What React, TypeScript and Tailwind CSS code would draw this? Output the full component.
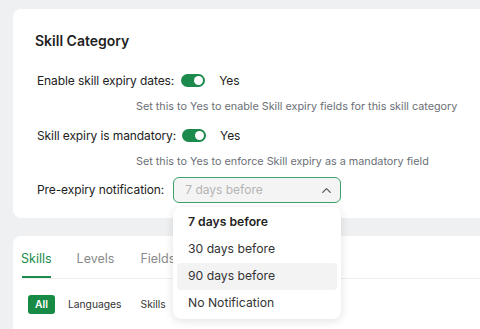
import { ChevronUp } from 'lucide-react';

function Toggle() {
  return (
    <span className="inline-flex items-center bg-[#1b8a4c] rounded-full w-[24px] h-[13px] px-[2px] justify-end">
      <span className="bg-white rounded-full w-[9px] h-[9px]"></span>
    </span>
  );
}

const options = ['7 days before', '30 days before', '90 days before', 'No Notification'];

export default function App() {
  return (
    <div className="relative bg-[#eef0f2] h-[329px] overflow-hidden pt-[9px] pl-[13px] font-['Inter',sans-serif] text-[#222]">
      <div className="bg-white rounded-l-lg h-[209px] pl-[22px] pt-[23px]">
        <h1 className="font-semibold text-[14px] leading-[18px] text-[#1f1f1f]">Skill Category</h1>

        <div className="mt-[22px] pl-[2px] text-[12px] tracking-[-0.1px]">
          <div className="flex items-center h-[18px]">
            <span>Enable skill expiry dates:</span>
            <span className="ml-[7px]"><Toggle /></span>
            <span className="ml-[14px]">Yes</span>
          </div>
          <div className="mt-[10px] ml-[99px] text-[10.8px] tracking-normal leading-[14px] text-[#6b6f76]">
            Set this to Yes to enable Skill expiry fields for this skill category
          </div>

          <div className="flex items-center h-[18px] mt-[13px]">
            <span>Skill expiry is mandatory:</span>
            <span className="ml-[6px]"><Toggle /></span>
            <span className="ml-[14px]">Yes</span>
          </div>
          <div className="mt-[10px] ml-[99px] text-[10.8px] tracking-normal leading-[14px] text-[#6b6f76]">
            Set this to Yes to enforce Skill expiry as a mandatory field
          </div>

          <div className="flex items-center mt-[8px]">
            <span>Pre-expiry notification:</span>
            <div className="ml-[9px] flex items-center justify-between w-[168px] h-[26px] border-[1.5px] border-[#3aa36a] rounded-md bg-[#f4f4f4] pl-[11px] pr-[6px]">
              <span className="text-[#b4b4b4] text-[12px] tracking-normal">7 days before</span>
              <ChevronUp size={15} strokeWidth={2} className="text-[#555]" />
            </div>
          </div>
        </div>
      </div>

      <div className="bg-white rounded-l-lg h-[120px] mt-[18px] pl-[8px]">
        <div className="flex items-end h-[43px] border-b border-[#eeeeee] text-[12.5px]">
          <div className="flex flex-col items-center">
            <span className="text-[#1b8a4c] leading-[18px]">Skills</span>
            <span className="bg-[#1b8a4c] w-[29px] h-[2px] mt-[8px]"></span>
          </div>
          <span className="text-[#8a8a8a] leading-[18px] ml-[25px] mb-[10px]">Levels</span>
          <span className="text-[#8a8a8a] leading-[18px] ml-[26px] mb-[10px]">Fields</span>
        </div>
        <div className="flex items-center mt-[16px] pl-[7px] text-[10.3px]">
          <span className="bg-[#178a45] text-white font-semibold rounded-[3px] px-[7px] h-[19px] flex items-center">All</span>
          <span className="ml-[13px] text-[#333]">Languages</span>
          <span className="ml-[19px] text-[#333]">Skills</span>
        </div>
      </div>

      <div className="absolute left-[173px] top-[207px] w-[168px] bg-white rounded-lg shadow-[0_2px_10px_rgba(0,0,0,0.12)] py-[2px] px-[4px] text-[12.2px]">
        {options.map((o, i) => (
          <div
            key={o}
            className={`h-[27px] flex items-center pl-[11px] rounded ${i === 0 ? 'font-semibold text-[#1f1f1f]' : 'text-[#333]'} ${i === 2 ? 'bg-[#f3f3f4]' : ''}`}
          >
            {o}
          </div>
        ))}
      </div>
    </div>
  );
}
